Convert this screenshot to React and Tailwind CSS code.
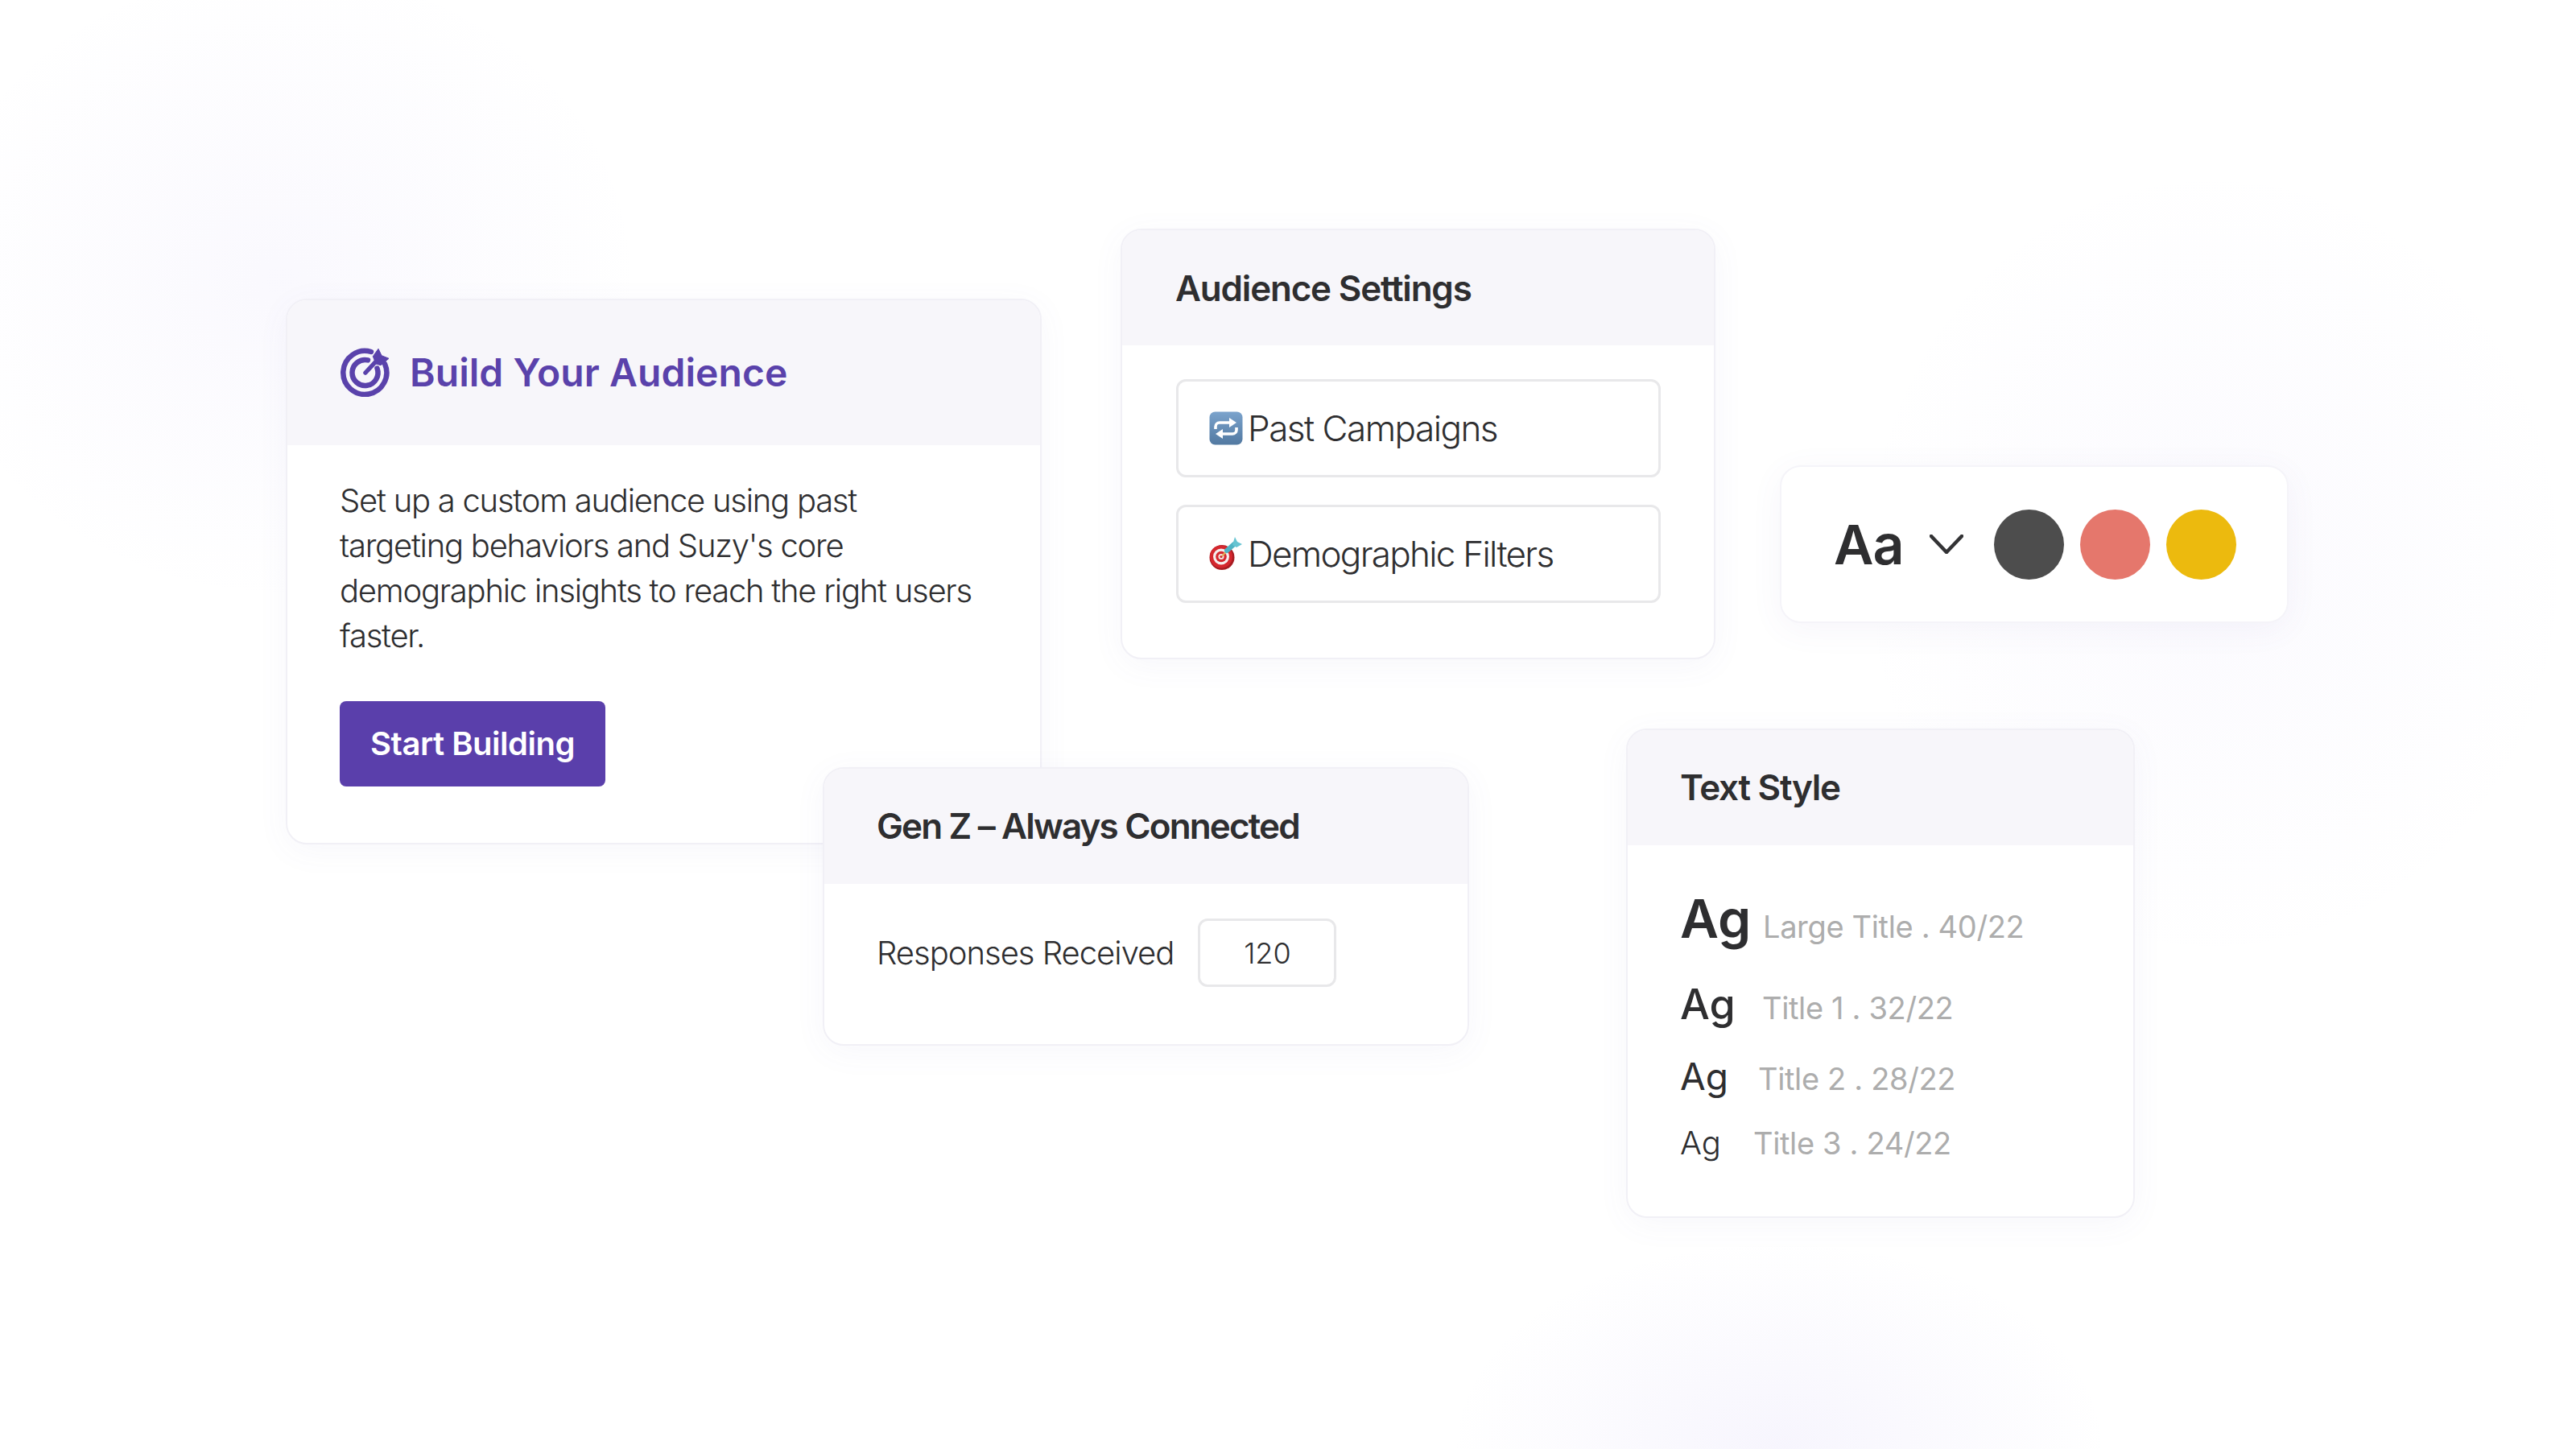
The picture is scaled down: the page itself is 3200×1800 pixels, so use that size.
import React from "react";

const font = { fontFamily: '"Inter", "Noto Sans", sans-serif' };

function Card({ className, header, headerClass, children }) {
  return (
    <section className={`absolute flex flex-col overflow-hidden rounded-[26px] border-2 border-[#f1f0f6] bg-white shadow-[0_8px_40px_rgba(100,90,170,0.05)] ${className}`}>
      <header className={`flex shrink-0 items-center bg-[#f7f6fa] ${headerClass}`}>{header}</header>
      {children}
    </section>
  );
}

function TargetIcon() {
  return (
    <svg width="62" height="62" viewBox="0 0 62 62" fill="none" className="mb-[3px] shrink-0">
      <path d="M38 6A27 27 0 1 0 55 21" stroke="#5a42ab" strokeWidth="6.5" strokeLinecap="round" />
      <path d="M34 16.4A16 16 0 1 0 45.5 26.5" stroke="#5a42ab" strokeWidth="6.5" strokeLinecap="round" />
      <path d="M31 32L44 18" stroke="#5a42ab" strokeWidth="5.5" strokeLinecap="round" />
      <path d="M40.3 11.7L47 2.3L51 10.7L60 14.3L50 22.7L44 21Z" fill="#5a42ab" stroke="#5a42ab" strokeWidth="1" strokeLinejoin="round" />
    </svg>
  );
}

function RepeatEmoji() {
  return (
    <svg width="42" height="42" viewBox="0 0 42 42" className="shrink-0">
      <defs>
        <linearGradient id="rep" x1="0" y1="0" x2="0" y2="1">
          <stop offset="0" stopColor="#7ba3cc" />
          <stop offset="1" stopColor="#5279a1" />
        </linearGradient>
      </defs>
      <rect x="0.5" y="0.5" width="41" height="41" rx="7" fill="url(#rep)" />
      <path d="M8 22v-3a5 5 0 0 1 5-5h13" stroke="#fff" strokeWidth="3.6" fill="none" />
      <path d="M25 8l9 6-9 6z" fill="#fff" />
      <path d="M34 20v3a5 5 0 0 1-5 5H16" stroke="#fff" strokeWidth="3.6" fill="none" />
      <path d="M17 22l-9 6 9 6z" fill="#fff" />
    </svg>
  );
}

function DartEmoji() {
  return (
    <svg width="42" height="42" viewBox="0 0 42 42" className="shrink-0">
      <circle cx="16" cy="25.5" r="15.5" fill="#a81c22" />
      <circle cx="15" cy="24.5" r="14" fill="#d5272e" />
      <circle cx="15" cy="24.5" r="10" fill="#f5eeee" />
      <circle cx="15" cy="24.5" r="6.8" fill="#d5272e" />
      <circle cx="15" cy="24.5" r="3.6" fill="#f3e3e0" />
      <circle cx="15" cy="24.5" r="1.6" fill="#c8262c" />
      <path d="M16 24L24 15" stroke="#e3b35a" strokeWidth="2" />
      <path d="M22 17L31 9" stroke="#4fb3c4" strokeWidth="6" strokeLinecap="round" />
      <path d="M29 10L32 0L35 6L41 9L34 13Z" fill="#66c4d2" />
    </svg>
  );
}

function OptionRow({ icon, label, tracking }) {
  return (
    <div className="flex h-[122px] items-center gap-[6px] rounded-[12px] border-[3px] border-[#e8e8ea] bg-white pl-[38px]">
      {icon}
      <span className={`text-[44px] font-light text-[#2e2e30] ${tracking}`}>{label}</span>
    </div>
  );
}

function StyleRow({ size, weight, label, agWidth, rowClass }) {
  return (
    <div className={`flex items-baseline leading-none ${rowClass}`}>
      <span className={`shrink-0 text-[#2e2e30] ${size} ${weight} ${agWidth}`}>Ag</span>
      <span className="text-[38px] font-normal tracking-[-0.35px] text-[#adadad]">{label}</span>
    </div>
  );
}

export default function App() {
  return (
    <div style={font} className="relative h-[1800px] w-[3200px] overflow-hidden bg-white">
      <div className="absolute left-[-100px] top-[-50px] h-[800px] w-[900px] bg-[radial-gradient(closest-side,rgba(150,130,235,0.05),rgba(150,130,235,0))]" />
      <div className="absolute left-[1800px] top-[1540px] h-[520px] w-[820px] bg-[radial-gradient(closest-side,rgba(150,130,235,0.08),rgba(150,130,235,0))]" />
      <div className="absolute left-[2300px] top-[200px] h-[1000px] w-[900px] bg-[radial-gradient(closest-side,rgba(150,130,235,0.04),rgba(150,130,235,0))]" />

      <Card
        className="left-[355px] top-[371px] h-[678px] w-[939px]"
        headerClass="h-[180px] gap-[24px] pl-[66px]"
        header={
          <>
            <TargetIcon />
            <h1 className="text-[48px] font-semibold tracking-[0.05px] text-[#5a42ab]">Build Your Audience</h1>
          </>
        }
      >
        <div className="flex flex-col items-start pl-[65px] pt-[41px]">
          <p className="w-[798px] text-[40px] font-light leading-[56px] tracking-[-1.25px] text-[#2e2e30]">
            Set up a custom audience using past targeting behaviors and Suzy's core demographic insights to reach the right users faster.
          </p>
          <button className="mt-[53px] flex h-[106px] w-[330px] items-center justify-center rounded-[8px] bg-[#5a3fab] text-[40px] font-semibold tracking-[-0.5px] text-white">
            Start Building
          </button>
        </div>
      </Card>

      <Card
        className="left-[1392px] top-[284px] h-[535px] w-[739px]"
        headerClass="h-[143px] pl-[66px]"
        header={<h2 className="text-[44px] font-semibold tracking-[-1.2px] text-[#2e2e30]">Audience Settings</h2>}
      >
        <div className="flex flex-col gap-[34px] pl-[67px] pr-[66px] pt-[42px]">
          <OptionRow icon={<RepeatEmoji />} label="Past Campaigns" tracking="tracking-[-1.5px]" />
          <OptionRow icon={<DartEmoji />} label="Demographic Filters" tracking="tracking-[-1.7px]" />
        </div>
      </Card>

      <section className="absolute left-[2211px] top-[578px] flex h-[196px] w-[632px] items-center rounded-[26px] border-2 border-[#f5f4f9] bg-white pl-[65px] shadow-[0_8px_40px_rgba(100,90,170,0.06)]">
        <span className="text-[68px] font-semibold leading-none tracking-[-1px] text-[#2e2e30]">Aa</span>
        <svg width="42" height="24" viewBox="0 0 42 24" fill="none" className="ml-[32px]">
          <path d="M2 2L21 22L40 2" stroke="#333335" strokeWidth="4.5" strokeLinecap="round" strokeLinejoin="round" />
        </svg>
        <div className="ml-[38px] flex items-center gap-[20px]">
          <div className="h-[87px] w-[87px] rounded-full bg-[#4d4d4d]" />
          <div className="h-[87px] w-[87px] rounded-full bg-[#e5776c]" />
          <div className="h-[87px] w-[87px] rounded-full bg-[#ecba0e]" />
        </div>
      </section>

      <Card
        className="left-[1022px] top-[953px] h-[346px] w-[803px]"
        headerClass="h-[143px] pl-[65px]"
        header={<h2 className="mb-[2px] text-[44px] font-semibold tracking-[-1.85px] text-[#2e2e30]">Gen Z – Always Connected</h2>}
      >
        <div className="flex items-center gap-[30px] pl-[65px] pt-[43px]">
          <span className="text-[40px] font-light tracking-[-1px] text-[#2e2e30]">Responses Received</span>
          <div className="flex h-[85px] w-[172px] items-center justify-center rounded-[12px] border-[3px] border-[#e8e8ea] text-[36px] font-light text-[#2e2e30]">
            120
          </div>
        </div>
      </Card>

      <Card
        className="left-[2020px] top-[905px] h-[608px] w-[632px]"
        headerClass="h-[143px] pl-[65px]"
        header={<h2 className="mb-[2px] text-[44px] font-semibold tracking-[-1.3px] text-[#2e2e30]">Text Style</h2>}
      >
        <div className="flex flex-col pl-[65px] pt-[58px]">
          <StyleRow size="text-[66px]" weight="font-semibold" label="Large Title . 40/22" agWidth="w-[103px]" />
          <StyleRow size="text-[52px]" weight="font-medium" label="Title 1 . 32/22" agWidth="w-[102px]" rowClass="mt-[48px]" />
          <StyleRow size="text-[46px]" weight="font-normal" label="Title 2 . 28/22" agWidth="w-[97px]" rowClass="mt-[40px]" />
          <StyleRow size="text-[40px]" weight="font-light" label="Title 3 . 24/22" agWidth="w-[91px]" rowClass="mt-[40px]" />
        </div>
      </Card>
    </div>
  );
}
